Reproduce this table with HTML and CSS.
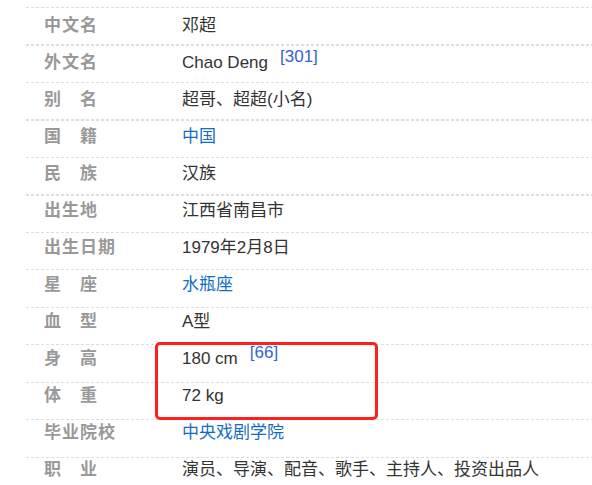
FILE: index.html
```html
<!DOCTYPE html>
<html lang="zh-CN">
<head>
    <meta charset="UTF-8">
    <meta name="viewport" content="width=device-width, initial-scale=1.0">
    <title>邓超 基本信息</title>
    <link rel="stylesheet" href="styles.css">
</head>
<body>
    <div class="basic-info">
        <div class="item"><span class="name">中文名</span><span class="value">邓超</span></div>
        <div class="item"><span class="name">外文名</span><span class="value">Chao Deng<sup class="ref">[301]</sup></span></div>
        <div class="item"><span class="name">别　名</span><span class="value">超哥、超超(小名)</span></div>
        <div class="item"><span class="name">国　籍</span><span class="value"><a href="#">中国</a></span></div>
        <div class="item"><span class="name">民　族</span><span class="value">汉族</span></div>
        <div class="item"><span class="name">出生地</span><span class="value">江西省南昌市</span></div>
        <div class="item"><span class="name">出生日期</span><span class="value">1979年2月8日</span></div>
        <div class="item"><span class="name">星　座</span><span class="value"><a href="#">水瓶座</a></span></div>
        <div class="item"><span class="name">血　型</span><span class="value">A型</span></div>
        <div class="item"><span class="name">身　高</span><span class="value">180 cm<sup class="ref">[66]</sup></span></div>
        <div class="item"><span class="name">体　重</span><span class="value">72 kg</span></div>
        <div class="item"><span class="name">毕业院校</span><span class="value"><a href="#">中央戏剧学院</a></span></div>
        <div class="item"><span class="name">职　业</span><span class="value">演员、导演、配音、歌手、主持人、投资出品人</span></div>

        <!-- highlight drawn over the height / weight rows -->
        <div class="mark"></div>
    </div>
</body>
</html>
```

FILE: styles.css
```css
body {
    margin: 0;
    padding-top: 7px;
    background: #fff;
    overflow: hidden;
    font-family: "Liberation Sans", Arial, "Noto Sans CJK SC", sans-serif;
}
.basic-info {
    position: relative;
    margin-left: 26px;
    height: 500px;
}
/* dotted row separators, a little wider apart than the text rows */
.basic-info::before {
    content: "";
    position: absolute;
    top: 0;
    left: 0;
    right: 0;
    bottom: 0;
    background: repeating-linear-gradient(90deg, #dedede 0 3px, transparent 3px 5px);
    -webkit-mask-image: repeating-linear-gradient(180deg, #000 0 1px, transparent 1px 37.5px);
    mask-image: repeating-linear-gradient(180deg, #000 0 1px, transparent 1px 37.5px);
}
.item {
    display: grid;
    grid-template-columns: 156px 1fr;
    align-items: center;
    height: 37px;
}
.name {
    padding-left: 18px;
    font-size: 17px;
    line-height: 20px;
    font-weight: bold;
    letter-spacing: 1px;
    color: #999;
    white-space: nowrap;
}
.value {
    font-size: 17px;
    line-height: 20px;
    color: #333;
    white-space: nowrap;
}
.value a {
    color: #136ec2;
    text-decoration: none;
}
.ref {
    font-size: 17px;
    line-height: 0;
    vertical-align: 6px;
    margin-left: 12px;
    color: #3366cc;
}
.mark {
    position: absolute;
    left: 129px;
    top: 335px;
    width: 217px;
    height: 72px;
    border: 3px solid #ff1f1f;
    border-radius: 5px;
}
```
